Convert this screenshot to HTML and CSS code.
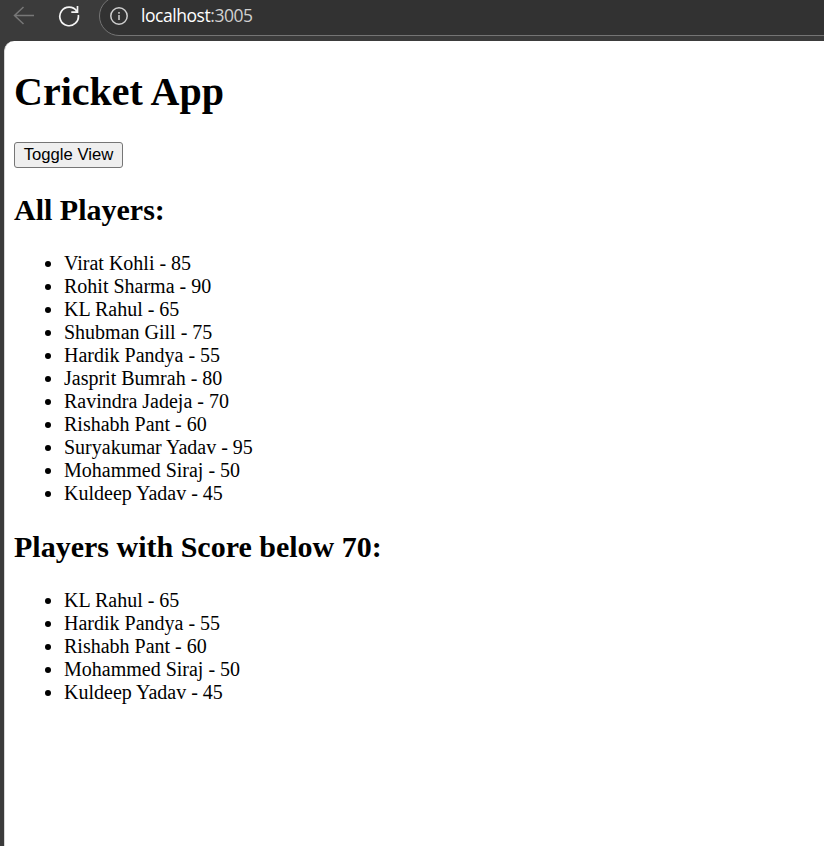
FILE: index.html
```html
<!DOCTYPE html>
<html lang="en">
<head>
<meta charset="utf-8">
<title>Cricket App</title>
<link rel="stylesheet" href="styles.css">
</head>
<body>
<header class="toolbar">
  <svg class="icon back" width="22" height="20" viewBox="0 0 22 20"><path d="M21 10.5H1.5M10.5 2L1.5 10.5l9 8.5"/></svg>
  <svg class="icon reload" width="22" height="22" viewBox="0 0 22 22"><path d="M18.8 6.2A9.3 9.3 0 1 0 20.3 10M19.5 1v6.2h-6.2"/></svg>
  <div class="address">
    <svg class="icon info" width="18" height="18" viewBox="0 0 18 18"><circle cx="9" cy="9" r="8.2"/><path d="M9 8v5M9 5v1.8"/></svg>
    <span class="url">localhost<span class="port">:3005</span></span>
  </div>
</header>
<main class="page">
  <h1>Cricket App</h1>
  <button type="button">Toggle View</button>
  <h2>All Players:</h2>
  <ul>
    <li>Virat Kohli - 85</li>
    <li>Rohit Sharma - 90</li>
    <li>KL Rahul - 65</li>
    <li>Shubman Gill - 75</li>
    <li>Hardik Pandya - 55</li>
    <li>Jasprit Bumrah - 80</li>
    <li>Ravindra Jadeja - 70</li>
    <li>Rishabh Pant - 60</li>
    <li>Suryakumar Yadav - 95</li>
    <li>Mohammed Siraj - 50</li>
    <li>Kuldeep Yadav - 45</li>
  </ul>
  <h2>Players with Score below 70:</h2>
  <ul>
    <li>KL Rahul - 65</li>
    <li>Hardik Pandya - 55</li>
    <li>Rishabh Pant - 60</li>
    <li>Mohammed Siraj - 50</li>
    <li>Kuldeep Yadav - 45</li>
  </ul>
</main>
</body>
</html>
```
FILE: styles.css
```css
* { box-sizing: border-box; }
body {
  margin: 0;
  height: 846px;
  overflow: hidden;
  display: flex;
  flex-direction: column;
  background: #3b3b3b;
  color: #000;
  font-family: "Liberation Serif", "Times New Roman", serif;
}
.toolbar {
  flex: none;
  height: 41px;
  display: flex;
  align-items: flex-start;
  padding-left: 13px;
}
.icon { flex: none; fill: none; stroke-width: 1.5; }
.back { margin-top: 5px; stroke: #777; }
.reload { margin: 5px 0 0 23px; stroke: #f4f4f4; stroke-width: 1.7; }
.address {
  flex: 1;
  height: 40px;
  margin: -4px -30px 0 19px;
  padding-left: 10px;
  display: flex;
  align-items: center;
  background: #323232;
  border: 1px solid #747474;
  border-radius: 20px;
}
.info { stroke: #cecece; }
.url {
  margin: 0 0 2px 13px;
  color: #fff;
  font: 17.5px/24px "Open Sans", "Noto Sans", sans-serif;
  letter-spacing: -0.45px;
}
.port { color: #d0d0d0; }
.page {
  flex: 1;
  margin-left: 4px;
  padding: 28px 10px 0 9px;
  background: #fff;
  border-left: 1px solid #d8d8d8;
  border-top-left-radius: 10px;
}
h1 { margin: 0 0 27px; font-size: 40px; line-height: 46px; }
button {
  display: block;
  width: 109px;
  height: 26px;
  padding: 0;
  border: 1px solid #767676;
  border-radius: 3px;
  background: #efefef;
  color: #000;
  font: 16.67px/22px "Liberation Sans", Arial, sans-serif;
}
h2 { margin: 25px 0; font-size: 30px; line-height: 34px; }
ul { margin: 0; padding-left: 50px; font-size: 20px; line-height: 23px; }
```
